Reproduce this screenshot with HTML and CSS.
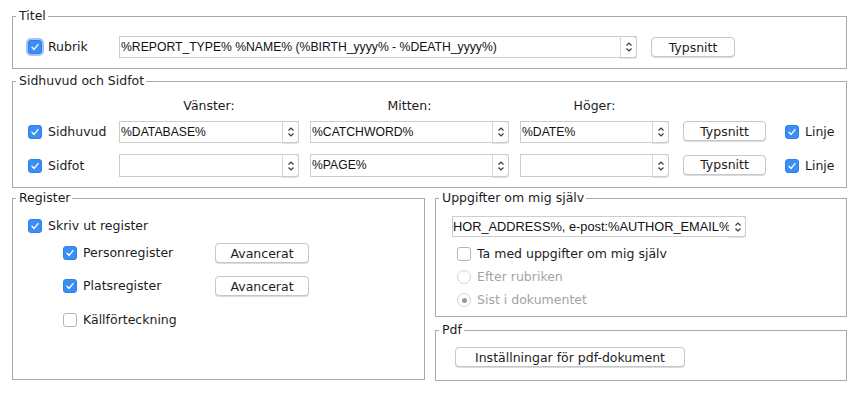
FILE: index.html
```html
<!DOCTYPE html>
<html lang="sv">
  <head>
    <meta charset="utf-8">
    <title>Utskriftsinställningar</title>
    <link rel="stylesheet" href="styles.css">
  </head>
  <body>
    <div class="page">
      <fieldset class="box titel">
        <legend>Titel</legend>
        <div class="titelrow">
          <label class="check"><span class="cb on focus"><svg viewBox="0 0 14 14"><path d="M3.5 7.3 L6 9.8 L10.5 4.2"/></svg></span>Rubrik</label>
          <div class="combo wide"><span class="val">%REPORT_TYPE% %NAME% (%BIRTH_yyyy% - %DEATH_yyyy%)</span><span class="arrows"><svg viewBox="0 0 8 12"><path d="M1.5 4.5 L4 2 L6.5 4.5 M1.5 7.5 L4 10 L6.5 7.5"/></svg></span></div>
          <button class="btn typsnitt">Typsnitt</button>
        </div>
      </fieldset>

      <fieldset class="box sidhuvud">
        <legend>Sidhuvud och Sidfot</legend>
        <div class="hfrow heads">
          <span class="lead"></span>
          <span class="colhead c1">Vänster:</span>
          <span class="colhead c2">Mitten:</span>
          <span class="colhead c3">Höger:</span>
        </div>
        <div class="hfrow first">
          <label class="check lead"><span class="cb on"><svg viewBox="0 0 14 14"><path d="M3.5 7.3 L6 9.8 L10.5 4.2"/></svg></span>Sidhuvud</label>
          <div class="combo c1"><span class="val">%DATABASE%</span><span class="arrows"><svg viewBox="0 0 8 12"><path d="M1.5 4.5 L4 2 L6.5 4.5 M1.5 7.5 L4 10 L6.5 7.5"/></svg></span></div>
          <div class="combo c2"><span class="val">%CATCHWORD%</span><span class="arrows"><svg viewBox="0 0 8 12"><path d="M1.5 4.5 L4 2 L6.5 4.5 M1.5 7.5 L4 10 L6.5 7.5"/></svg></span></div>
          <div class="combo c3"><span class="val">%DATE%</span><span class="arrows"><svg viewBox="0 0 8 12"><path d="M1.5 4.5 L4 2 L6.5 4.5 M1.5 7.5 L4 10 L6.5 7.5"/></svg></span></div>
          <button class="btn typsnitt">Typsnitt</button>
          <label class="check linje"><span class="cb on"><svg viewBox="0 0 14 14"><path d="M3.5 7.3 L6 9.8 L10.5 4.2"/></svg></span>Linje</label>
        </div>
        <div class="hfrow second">
          <label class="check lead"><span class="cb on"><svg viewBox="0 0 14 14"><path d="M3.5 7.3 L6 9.8 L10.5 4.2"/></svg></span>Sidfot</label>
          <div class="combo c1"><span class="val"></span><span class="arrows"><svg viewBox="0 0 8 12"><path d="M1.5 4.5 L4 2 L6.5 4.5 M1.5 7.5 L4 10 L6.5 7.5"/></svg></span></div>
          <div class="combo c2"><span class="val">%PAGE%</span><span class="arrows"><svg viewBox="0 0 8 12"><path d="M1.5 4.5 L4 2 L6.5 4.5 M1.5 7.5 L4 10 L6.5 7.5"/></svg></span></div>
          <div class="combo c3"><span class="val"></span><span class="arrows"><svg viewBox="0 0 8 12"><path d="M1.5 4.5 L4 2 L6.5 4.5 M1.5 7.5 L4 10 L6.5 7.5"/></svg></span></div>
          <button class="btn typsnitt">Typsnitt</button>
          <label class="check linje"><span class="cb on"><svg viewBox="0 0 14 14"><path d="M3.5 7.3 L6 9.8 L10.5 4.2"/></svg></span>Linje</label>
        </div>
      </fieldset>

      <div class="bottom">
        <fieldset class="box register">
          <legend>Register</legend>
          <label class="check skriv"><span class="cb on"><svg viewBox="0 0 14 14"><path d="M3.5 7.3 L6 9.8 L10.5 4.2"/></svg></span>Skriv ut register</label>
          <div class="regrow">
            <label class="check"><span class="cb on"><svg viewBox="0 0 14 14"><path d="M3.5 7.3 L6 9.8 L10.5 4.2"/></svg></span>Personregister</label>
            <button class="btn avancerat">Avancerat</button>
          </div>
          <div class="regrow">
            <label class="check"><span class="cb on"><svg viewBox="0 0 14 14"><path d="M3.5 7.3 L6 9.8 L10.5 4.2"/></svg></span>Platsregister</label>
            <button class="btn avancerat">Avancerat</button>
          </div>
          <div class="regrow last">
            <label class="check"><span class="cb"></span>Källförteckning</label>
          </div>
        </fieldset>

        <div class="rightcol">
          <fieldset class="box uppgifter">
            <legend>Uppgifter om mig själv</legend>
            <div class="combo author"><span class="val">HOR_ADDRESS%, e-post:%AUTHOR_EMAIL%</span><span class="arrows bare"><svg viewBox="0 0 8 12"><path d="M1.5 4.5 L4 2 L6.5 4.5 M1.5 7.5 L4 10 L6.5 7.5"/></svg></span></div>
            <label class="check opt"><span class="cb"></span>Ta med uppgifter om mig själv</label>
            <label class="check opt disabled"><span class="radio"></span>Efter rubriken</label>
            <label class="check opt disabled"><span class="radio sel"></span>Sist i dokumentet</label>
          </fieldset>
          <fieldset class="box pdf">
            <legend>Pdf</legend>
            <button class="btn pdfbtn">Inställningar för pdf-dokument</button>
          </fieldset>
        </div>
      </div>
    </div>
  </body>
</html>
```

FILE: styles.css
```css
html, body {
  margin: 0;
  background: #ffffff;
}
body {
  font-family: "DejaVu Sans", Verdana, sans-serif;
  font-size: 12.5px;
  color: #1c1c1c;
}
.page {
  width: 835px;
  margin-left: 12px;
  padding-top: 9px;
  display: flex;
  flex-direction: column;
}
.box {
  box-sizing: border-box;
  margin: 0;
  border: 1px solid #a9a9a9;
  padding: 0 0 0 3px;
  min-width: 0;
}
.box > :not(legend) {
  margin-left: 12px;
}
.box legend {
  padding: 0 2px 0 3px;
  margin-left: 0;
  line-height: 14px;
  font-size: 12.5px;
}
.titel {
  height: 60px;
}
.titelrow {
  display: flex;
  align-items: center;
  margin-top: 13px;
}
.check {
  display: flex;
  align-items: center;
  white-space: nowrap;
  line-height: 16px;
}
.titelrow .check {
  width: 91px;
}
.cb {
  box-sizing: border-box;
  width: 14px;
  height: 14px;
  border-radius: 3px;
  border: 1px solid #b4b4b4;
  background: #ffffff;
  margin-right: 6px;
  flex: none;
  display: flex;
}
.cb.on {
  background: #3a8ef6;
  border-color: #2f80ea;
}
.cb.focus {
  box-shadow: 0 0 0 2px rgba(90, 150, 235, 0.55);
}
.cb svg {
  width: 12px;
  height: 12px;
  fill: none;
  stroke: #ffffff;
  stroke-width: 1.6;
  stroke-linecap: round;
  stroke-linejoin: round;
}
.radio {
  box-sizing: border-box;
  width: 14px;
  height: 14px;
  border-radius: 50%;
  border: 1px solid #d2d2d2;
  background: #ffffff;
  margin-right: 6px;
  flex: none;
  display: flex;
  align-items: center;
  justify-content: center;
}
.radio.sel::after {
  content: "";
  width: 5px;
  height: 5px;
  border-radius: 50%;
  background: #9a9a9a;
}
.disabled {
  color: #a3a3a3;
}
.combo {
  box-sizing: border-box;
  height: 22px;
  display: flex;
  border: 1px solid #cdcdcd;
  border-right: none;
  background: #ffffff;
  font-family: "Liberation Sans", Arial, sans-serif;
  font-size: 12.2px;
  color: #111111;
}
.combo .val {
  flex: 1;
  min-width: 0;
  overflow: hidden;
  white-space: nowrap;
  line-height: 20px;
  padding-left: 1px;
}
.arrows {
  box-sizing: border-box;
  width: 17px;
  border: 1px solid #cdcdcd;
  border-left-color: #d8d8d8;
  border-radius: 0 4px 4px 0;
  margin: -1px 0;
  display: flex;
  align-items: center;
  justify-content: center;
  box-shadow: 0 1px 0 #e2e2e2;
}
.arrows svg {
  width: 8px;
  height: 12px;
  fill: none;
  stroke: #3a3a3a;
  stroke-width: 1.2;
}
.arrows.bare {
  border-left-color: transparent;
}
.combo.wide {
  width: 518px;
}
.btn {
  box-sizing: border-box;
  height: 20px;
  padding: 0;
  border: 1px solid #c6c6c6;
  border-radius: 4px;
  background: #ffffff;
  box-shadow: 0 1px 0 #dcdcdc;
  font-family: "DejaVu Sans", Verdana, sans-serif;
  font-size: 12.5px;
  color: #1c1c1c;
  line-height: 17px;
}
.titelrow .typsnitt {
  width: 84px;
  margin-left: 14px;
}
.sidhuvud {
  height: 114px;
  margin-top: 5px;
}
.hfrow {
  display: flex;
  align-items: center;
  gap: 11px;
}
.hfrow .lead {
  width: 80px;
}
.hfrow .c1 {
  width: 180px;
}
.hfrow .c2 {
  width: 199px;
}
.hfrow .c3 {
  width: 149px;
}
.heads {
  margin-top: 10px;
  height: 16px;
}
.colhead {
  text-align: center;
  line-height: 16px;
}
.first {
  margin-top: 7px;
}
.second {
  margin-top: 11px;
}
.second .combo {
  height: 23px;
}
.hfrow .typsnitt {
  width: 83px;
  margin-left: 3px;
  margin-top: -2px;
}
.hfrow .linje {
  margin-left: 8px;
}
.bottom {
  display: flex;
  margin-top: 3px;
  gap: 10px;
}
.register {
  width: 413px;
  height: 189px;
}
.skriv {
  margin-top: 13px;
}
.regrow {
  display: flex;
  align-items: center;
  height: 20px;
  margin-top: 9px;
  padding-left: 35px;
}
.regrow .check {
  width: 152px;
}
.regrow + .regrow {
  margin-top: 13px;
}
.regrow.last {
  margin-top: 14px;
}
.avancerat {
  width: 94px;
}
.rightcol {
  flex: 1;
  display: flex;
  flex-direction: column;
}
.uppgifter {
  height: 126px;
}
.box > .combo.author {
  width: 294px;
  margin-top: 11px;
  margin-left: 13px;
  height: 21px;
  font-size: 12.8px;
}
.combo.author .val {
  padding-left: 0;
}
.box > .opt {
  margin-left: 18px;
}
.uppgifter .opt:nth-of-type(1) {
  margin-top: 9px;
}
.uppgifter .opt + .opt {
  margin-top: 7px;
}
.pdf {
  height: 58px;
  margin-top: 6px;
}
.box > .pdfbtn {
  width: 230px;
  margin-top: 10px;
  margin-left: 16px;
}
```
